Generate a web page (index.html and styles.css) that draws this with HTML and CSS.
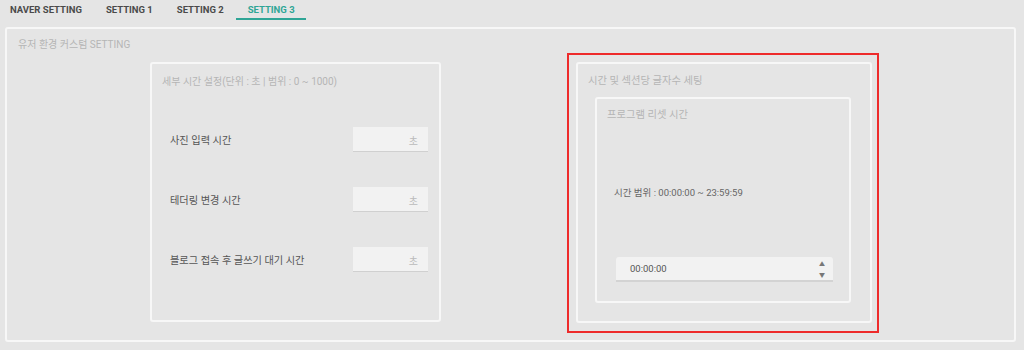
FILE: index.html
```html
<!DOCTYPE html>
<html lang="ko">
<head>
  <meta charset="UTF-8" />
  <title>SETTING 3</title>
  <link rel="stylesheet" href="styles.css">
</head>
<body>

  <div class="tabs">
    <div class="tab">NAVER SETTING</div>
    <div class="tab">SETTING 1</div>
    <div class="tab">SETTING 2</div>
    <div class="tab active">SETTING 3</div>
  </div>

  <div class="panel">
    <div class="panel-title">유저 환경 커스텀 SETTING</div>

    <div class="columns">
      <div class="card card-time">
        <div class="card-title">세부 시간 설정(단위 : 초 | 범위 : 0 ~ 1000)</div>

        <div class="row first">
          <span class="label">사진 입력 시간</span>
          <div class="sec-input"><span>초</span></div>
        </div>
        <div class="row">
          <span class="label">테더링 변경 시간</span>
          <div class="sec-input"><span>초</span></div>
        </div>
        <div class="row">
          <span class="label">블로그 접속 후 글쓰기 대기 시간</span>
          <div class="sec-input"><span>초</span></div>
        </div>
      </div>

      <div class="highlight">
        <div class="card card-section">
          <div class="card-title">시간 및 섹션당 글자수 세팅</div>

          <div class="card inner-card">
            <div class="card-title">프로그램 리셋 시간</div>
            <div class="range">시간 범위 : 00:00:00 ~ 23:59:59</div>
            <div class="time-input">
              <span>00:00:00</span>
              <div class="spin">
                <span>&#9650;</span>
                <span>&#9660;</span>
              </div>
            </div>
          </div>
        </div>
      </div>
    </div>
  </div>

</body>
</html>
```

FILE: styles.css
```css
body {
  margin: 0;
  background: #e5e5e5;
  font-family: Roboto, "Noto Sans CJK KR", sans-serif;
  color: #555;
}
.tabs {
  display: flex;
  height: 21px;
}
.tab {
  font-size: 9.5px;
  font-weight: bold;
  color: #4a4a4a;
  padding: 4px 12px 0 10px;
  margin-right: 2px;
  box-sizing: border-box;
  height: 20px;
}
.tab.active {
  color: #2fa596;
  border-bottom: 2px solid #2fa596;
  margin-left: -2px;
  padding: 4px 11px 0 12px;
}
.panel {
  margin: 6px 8px 0 5px;
  height: 315px;
  box-sizing: border-box;
  border: 2px solid #f7f7f7;
  border-radius: 3px;
}
.panel-title {
  font-size: 10px;
  color: #b5b5b5;
  padding: 7px 0 0 11px;
  height: 18px;
}
.columns {
  display: flex;
  align-items: flex-start;
}
.card {
  border: 2px solid #f7f7f7;
  border-radius: 3px;
  box-sizing: border-box;
}
.card-title {
  font-size: 10.3px;
  color: #b5b5b5;
}
.card-time {
  width: 291px;
  height: 260px;
  margin: 8px 0 0 143px;
  padding: 9px 0 0 10px;
}
.card-time .card-title {
  font-size: 10px;
}
.row {
  display: flex;
  align-items: center;
  justify-content: space-between;
  padding-right: 11px;
  height: 25px;
  margin-top: 35px;
}
.row.first {
  margin-top: 39px;
}
.label {
  font-size: 10.2px;
  color: #555;
  padding-left: 8px;
}
.sec-input {
  width: 75px;
  height: 25px;
  box-sizing: border-box;
  background: #f2f2f2;
  border-bottom: 1px solid #d0d0d0;
  font-size: 10px;
  color: #bbb;
  text-align: right;
  padding: 6px 10px 0 0;
}
.highlight {
  margin: -1px 0 0 126px;
  width: 312px;
  height: 280px;
  box-sizing: border-box;
  border: 2px solid #ee2b2b;
  padding: 7px 5px 0 7px;
}
.card-section {
  width: 296px;
  height: 261px;
  padding: 8px 0 0 10px;
}
.inner-card {
  width: 256px;
  height: 206px;
  margin: 10px 0 0 7px;
  padding: 7px 0 0 10px;
}
.range {
  font-size: 9.5px;
  color: #666;
  margin: 64px 0 0 7px;
}
.time-input {
  display: flex;
  justify-content: space-between;
  align-items: center;
  width: 217px;
  height: 25px;
  box-sizing: border-box;
  margin: 58px 0 0 9px;
  background: #f2f2f2;
  border-bottom: 2px solid #d3d3d3;
  border-radius: 3px 3px 0 0;
  padding: 0 8px 0 14px;
  font-size: 9.5px;
  color: #555;
}
.spin {
  display: flex;
  flex-direction: column;
  font-size: 6px;
  color: #777;
  line-height: 11px;
}
```
